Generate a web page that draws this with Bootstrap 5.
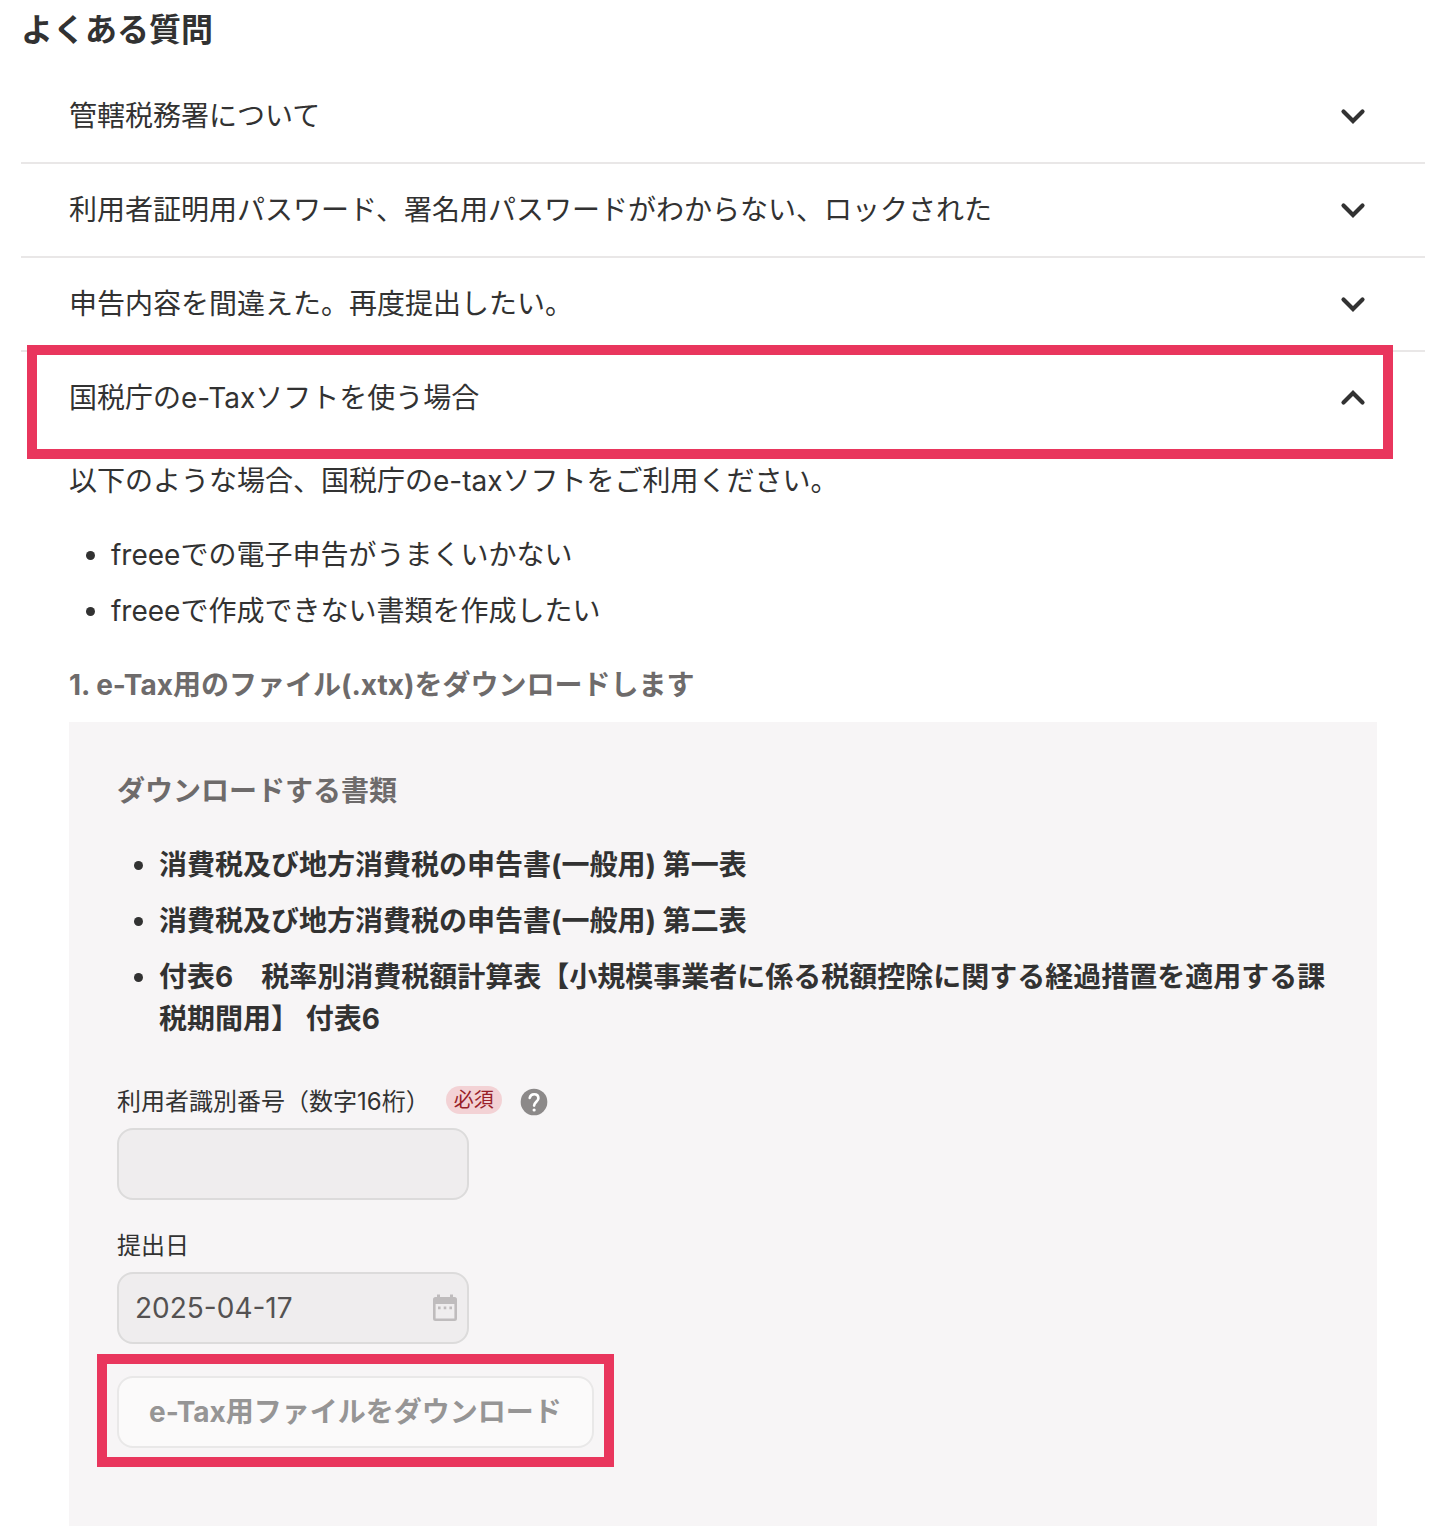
<!DOCTYPE html>
<html lang="ja">
<head>
<meta charset="utf-8">
<meta name="viewport" content="width=device-width, initial-scale=1">
<title>よくある質問</title>
<link href="https://cdn.jsdelivr.net/npm/bootstrap@5.3.0/dist/css/bootstrap.min.css" rel="stylesheet">
<style>
body { font-family: Inter, "Noto Sans CJK JP", sans-serif; font-size: 28px; line-height: 42px; color: #323232; background: #fff; }
.faq { padding: 6px 23px 0 21px; }
.faq-title { font-size: 32px; line-height: 48px; }
.faq-item + .faq-item { border-top: 2px solid #e9e7e7; }
.faq-toggle { padding: 25px 56px 25px 48px; color: inherit; background: none; border: 0; text-align: left; }
.faq-toggle svg { width: 32px; height: 32px; }
.faq-toggle:not(.collapsed) svg { transform: rotate(180deg); }
.faq-body { padding: 16px 48px 0; }
.bullets { padding-left: 42px; margin: 32px 0; }
.bullets li + li { margin-top: 14px; }
.subhead { font-size: 28px; line-height: 42px; color: #6e6b6b; }
.panel { padding: 48px 48px 96px; background: #f7f5f6; }
.panel .bullets { margin-bottom: 44px; }
.field-name { font-size: 24px; line-height: 36px; }
.required-tag { padding: 0 8px; margin-bottom: 4px; font-size: 20px; line-height: 28px; border-radius: 14px; color: #991f29; background: #f3d2d5; }
.help { color: #8c8989; }
.help svg, .date-field svg { width: 32px; height: 32px; }
.field-box { width: 352px; }
.field-box .form-control { height: 72px; padding: 0 16px; font-size: 28px; border: 2px solid #dcdbdb; border-radius: 16px; color: #545252; background: #efedee; opacity: 1; }
.date-field svg { top: 20px; right: 8px; color: #bfbcbd; }
.download { height: 72px; padding: 0 30px; font-size: 28px; line-height: 42px; border: 2px solid #e9e8e8; border-radius: 16px; color: #969595; background: #fbfafa; }
.download:disabled { color: #969595; border-color: #e9e8e8; background: #fbfafa; opacity: 1; }
.callout-frame { border: 10px solid #e9365d; pointer-events: none; }
.frame-row { top: -7px; right: 32px; bottom: -15px; left: 6px; }
.frame-button { top: -22px; right: -20px; bottom: -19px; left: -20px; }
</style>
<script src="https://cdn.jsdelivr.net/npm/bootstrap@5.3.0/dist/js/bootstrap.bundle.min.js"></script>
</head>
<body>
<svg class="d-none" aria-hidden="true">
  <symbol id="chevron" viewBox="0 0 32 32"><path d="M6.500 11.500l9.500 9.500 9.500-9.500" fill="none" stroke="currentColor" stroke-width="4.200" stroke-linecap="round"/></symbol>
</svg>
<main class="faq">
  <h1 class="faq-title fw-bold mb-3">よくある質問</h1>
  <section class="faq-item">
    <button class="faq-toggle collapsed d-flex w-100 justify-content-between align-items-center" type="button" aria-expanded="false"><span>管轄税務署について</span><svg aria-hidden="true"><use href="#chevron"/></svg></button>
  </section>
  <section class="faq-item">
    <button class="faq-toggle collapsed d-flex w-100 justify-content-between align-items-center" type="button" aria-expanded="false"><span>利用者証明用パスワード、署名用パスワードがわからない、ロックされた</span><svg aria-hidden="true"><use href="#chevron"/></svg></button>
  </section>
  <section class="faq-item">
    <button class="faq-toggle collapsed d-flex w-100 justify-content-between align-items-center" type="button" aria-expanded="false"><span>申告内容を間違えた。再度提出したい。</span><svg aria-hidden="true"><use href="#chevron"/></svg></button>
  </section>
  <section class="faq-item">
    <div class="position-relative">
      <button class="faq-toggle d-flex w-100 justify-content-between align-items-center" type="button" data-bs-toggle="collapse" data-bs-target="#etax" aria-controls="etax" aria-expanded="true"><span>国税庁のe-Taxソフトを使う場合</span><svg aria-hidden="true"><use href="#chevron"/></svg></button>
      <div class="callout-frame frame-row position-absolute"></div>
    </div>
    <div class="collapse show" id="etax">
      <div class="faq-body">
        <p class="mb-0">以下のような場合、国税庁のe-taxソフトをご利用ください。</p>
        <ul class="bullets">
          <li>freeeでの電子申告がうまくいかない</li>
          <li>freeeで作成できない書類を作成したい</li>
        </ul>
        <h2 class="subhead fw-bold mb-3">1. e-Tax用のファイル(.xtx)をダウンロードします</h2>
        <div class="panel">
          <h3 class="subhead fw-bold mb-0">ダウンロードする書類</h3>
          <ul class="bullets fw-bold">
            <li>消費税及び地方消費税の申告書(一般用) 第一表</li>
            <li>消費税及び地方消費税の申告書(一般用) 第二表</li>
            <li>付表6　税率別消費税額計算表【小規模事業者に係る税額控除に関する経過措置を適用する課税期間用】 付表6</li>
          </ul>
          <div class="d-flex align-items-center gap-3 mb-2">
            <label class="field-name" for="user-number">利用者識別番号（数字16桁）</label>
            <span class="required-tag">必須</span>
            <button class="help btn p-0 border-0 d-flex" type="button" aria-label="ヘルプ"><svg viewBox="0 0 24 24" aria-hidden="true"><circle cx="12" cy="12" r="10" fill="currentColor"/><path d="M8.800 8.900C9.100 7.200 10.400 6.200 12.100 6.200c1.900 0 3.200 1.200 3.200 2.900 0 2.500-3.200 2.900-3.200 5.600" fill="none" stroke="#fff" stroke-width="2" stroke-linecap="round"/><circle cx="12.100" cy="18" r="1.200" fill="#fff"/></svg></button>
          </div>
          <div class="field-box mb-4 pb-1"><input class="form-control" id="user-number" type="text" disabled></div>
          <label class="field-name d-block mb-2" for="filing-date">提出日</label>
          <div class="field-box date-field position-relative mb-4 pb-2">
            <input class="form-control" id="filing-date" type="text" value="2025-04-17" disabled>
            <svg class="position-absolute" viewBox="0 0 32 32" aria-hidden="true"><path fill="currentColor" fill-rule="evenodd" d="M8 2.500h3V5h10V2.500h3V5h1.500A2.500 2.500 0 0 1 28 7.500v19a2.500 2.500 0 0 1-2.500 2.500h-19A2.500 2.500 0 0 1 4 26.500v-19A2.500 2.500 0 0 1 6.500 5H8zM6.600 12v14.500h18.800V12zM9 14.600h2.600v2.600H9zm5.700 0h2.600v2.600h-2.600zm5.700 0H23v2.600h-2.600z"/></svg>
          </div>
          <div class="d-inline-block position-relative">
            <button class="download btn fw-bold d-block" type="button" disabled>e-Tax用ファイルをダウンロード</button>
            <div class="callout-frame frame-button position-absolute"></div>
          </div>
        </div>
      </div>
    </div>
  </section>
</main>
</body>
</html>
